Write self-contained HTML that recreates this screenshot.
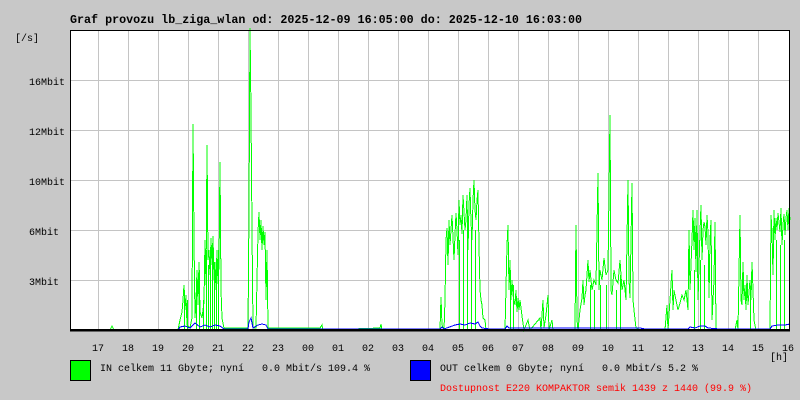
<!DOCTYPE html>
<html><head><meta charset="utf-8"><style>
html,body{margin:0;padding:0;background:#c8c8c8;}
svg{display:block}
text{font-family:"Liberation Mono","DejaVu Sans Mono",monospace;font-size:10px;fill:#000}
</style></head><body>
<svg width="800" height="400" viewBox="0 0 800 400">
<rect width="800" height="400" fill="#c8c8c8"/>
<rect x="70" y="30" width="720" height="300" fill="#fff"/>
<g stroke="#c4c4c4" stroke-width="1" shape-rendering="crispEdges">
<path d="M98.5 30V330M128.5 30V330M158.5 30V330M188.5 30V330M218.5 30V330M248.5 30V330M278.5 30V330M308.5 30V330M338.5 30V330M368.5 30V330M398.5 30V330M428.5 30V330M458.5 30V330M488.5 30V330M518.5 30V330M548.5 30V330M578.5 30V330M608.5 30V330M638.5 30V330M668.5 30V330M698.5 30V330M728.5 30V330M758.5 30V330"/>
<path d="M70 80.5H790M70 130.5H790M70 180.5H790M70 230.5H790M70 280.5H790"/>
</g>
<polyline fill="none" stroke="#00ff00" stroke-width="1" shape-rendering="crispEdges" points="70,330 110,330 112,326 114,330 178,330 180,320 182,312 183,300 184,285 185,310 186,295 187,325 190,328 192,318 193,124 194,240 195,318 196,300 197,270 198,305 199,262 200,312 202,318 204,302 205,240 206,285 207,145 208,260 209,250 210,275 211,238 212,265 213,236 214,280 215,262 216,290 217,250 218,284 219,265 220,162 221,290 222,318 224,328 248,328 249,210 250,28 251,113 252,230 253,328 256,328 258,232 259,212 260,240 261,220 262,250 263,226 264,245 265,232 266,300 267,250 268,328 320,328 322,325 323,330 380,328 381,324 382,330 440,330 441,297 442,325 444,330 445,300 446,240 447,228 448,265 449,220 450,245 452,215 454,260 455,235 456,213 457,230 458,255 459,200 460,225 461,215 462,234 463,195 464,212 465,230 466,220 467,195 468,250 469,205 470,188 471,222 472,240 473,200 474,180 475,210 476,220 477,200 478,190 479,245 480,290 481,300 482,305 483,318 485,320 486,330 505,330 507,245 508,225 509,290 510,260 511,300 512,280 513,295 514,300 515,305 516,290 517,312 518,298 519,310 520,300 522,316 524,330 528,320 530,330 540,318 541,330 543,300 544,328 546,315 548,295 549,330 552,320 553,330 575,330 576,225 577,320 578,330 580,310 582,298 583,280 584,305 585,295 586,290 588,260 589,282 590,270 592,290 594,280 596,285 598,173 599,290 600,270 602,280 604,258 606,275 608,270 610,115 611,290 612,295 614,270 616,280 618,283 620,260 622,290 624,280 626,300 628,180 629,280 630,298 632,183 633,300 634,310 636,328 640,330 665,330 667,305 668,330 670,300 672,270 673,310 674,290 676,300 678,310 680,303 682,295 684,300 686,290 688,310 689,230 690,290 692,240 693,210 694,250 695,218 696,272 697,210 698,300 700,232 701,205 702,260 703,230 704,222 705,227 706,245 707,215 708,233 709,298 710,240 711,220 712,320 714,280 715,222 716,330 735,330 737,320 738,330 740,215 741,300 742,305 743,262 744,300 745,285 746,310 747,275 748,305 750,280 751,300 752,262 753,290 754,320 756,330 770,330 771,215 772,232 773,275 774,210 775,240 776,218 777,230 778,213 779,222 780,232 781,208 782,245 783,225 784,214 785,235 786,218 787,210 788,230 789,208 790,220"/>
<g stroke="#00ff00" stroke-width="1" shape-rendering="crispEdges">
<path d="M184.5 330V290M187.5 330V300M196.5 330V290M199.5 330V270M203.5 330V300M206.5 330V250M208.5 330V265M210.5 330V255M212.5 330V245M214.5 330V262M216.5 330V258M218.5 330V250M459.5 330V240M463.5 330V230M467.5 330V235M471.5 330V235M475.5 330V230M510.5 330V270M513.5 330V285M590.5 330V285M594.5 330V290M600.5 330V285M606.5 330V285M616.5 330V290M620.5 330V275M694.5 330V270M700.5 330V260M704.5 330V265M750.5 330V295M776.5 330V240M780.5 330V245M784.5 330V240"/>
</g>
<polyline fill="none" stroke="#0000ff" stroke-width="1" shape-rendering="crispEdges" points="70,330 178,330 180,327 185,326 190,328 195,323 200,327 205,325 210,327 215,325 220,326 224,329 248,329 249,322 251,318 253,328 258,325 262,324 266,325 268,329 440,329 442,327 444,329 455,325 460,324 465,325 470,323 475,324 478,322 480,326 482,328 490,329 505,329 507,326 509,328 600,328 640,328 645,329 688,329 690,327 695,328 700,326 705,326 708,328 720,329 770,329 772,326 778,325 785,325 790,324"/>
<rect x="70.5" y="30.5" width="719" height="299" fill="none" stroke="#000" stroke-width="1" shape-rendering="crispEdges"/>
<path d="M70 330.5H790" stroke="#000" stroke-width="2" shape-rendering="crispEdges"/>
<text x="70" y="23" style="font-size:11.7px;font-weight:bold">Graf provozu lb_ziga_wlan od: 2025-12-09 16:05:00 do: 2025-12-10 16:03:00</text>
<text x="15" y="41">[/s]</text>
<text x="29" y="85">16Mbit</text>
<text x="29" y="135">12Mbit</text>
<text x="29" y="185">10Mbit</text>
<text x="29" y="235">6Mbit</text>
<text x="29" y="285">3Mbit</text>
<g text-anchor="middle">
<text x="98" y="351">17</text><text x="128" y="351">18</text><text x="158" y="351">19</text><text x="188" y="351">20</text><text x="218" y="351">21</text><text x="248" y="351">22</text><text x="278" y="351">23</text><text x="308" y="351">00</text><text x="338" y="351">01</text><text x="368" y="351">02</text><text x="398" y="351">03</text><text x="428" y="351">04</text><text x="458" y="351">05</text><text x="488" y="351">06</text><text x="518" y="351">07</text><text x="548" y="351">08</text><text x="578" y="351">09</text><text x="608" y="351">10</text><text x="638" y="351">11</text><text x="668" y="351">12</text><text x="698" y="351">13</text><text x="728" y="351">14</text><text x="758" y="351">15</text><text x="788" y="351">16</text>
</g>
<text x="770" y="360">[h]</text>
<rect x="70.5" y="360.5" width="20" height="20" fill="#00ff00" stroke="#000"/>
<text x="100" y="371" xml:space="preserve">IN celkem 11 Gbyte; nyní   0.0 Mbit/s 109.4 %</text>
<rect x="410.5" y="360.5" width="20" height="20" fill="#0000ff" stroke="#000"/>
<text x="440" y="371" xml:space="preserve">OUT celkem 0 Gbyte; nyní   0.0 Mbit/s 5.2 %</text>
<text x="440" y="391" style="fill:#ff0000">Dostupnost E220 KOMPAKTOR semik 1439 z 1440 (99.9 %)</text>
</svg>
</body></html>
